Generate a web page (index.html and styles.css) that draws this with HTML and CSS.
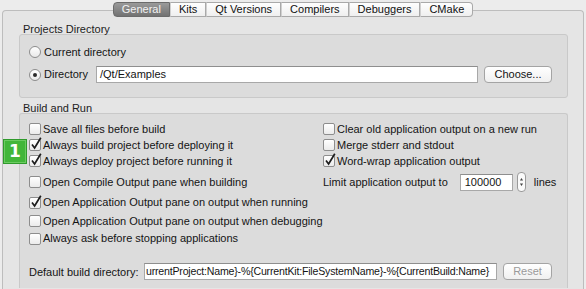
FILE: index.html
```html
<!DOCTYPE html>
<html lang="en">
<head>
  <meta charset="UTF-8" />
  <title>Build and Run - General</title>
  <link rel="stylesheet" href="styles.css">
</head>
<body>

<div class="window">
  <div class="tabs">
    <div class="tab active">General</div>
    <div class="tab">Kits</div>
    <div class="tab">Qt Versions</div>
    <div class="tab">Compilers</div>
    <div class="tab">Debuggers</div>
    <div class="tab">CMake</div>
  </div>

  <div class="pane">
    <div class="group-title">Projects Directory</div>
    <div class="group projects">
      <div class="option"><span class="radio"></span>Current directory</div>
      <div class="dir-row">
        <div class="option dir-option"><span class="radio checked"></span>Directory</div>
        <div class="field dir-field">/Qt/Examples</div>
        <div class="button choose">Choose...</div>
      </div>
    </div>

    <div class="group-title second">Build and Run</div>
    <div class="group build">
      <div class="options">
        <div class="option"><span class="check"></span>Save all files before build</div>
        <div class="option"><span class="check on"><svg viewBox="0 0 14 14"><path d="M3 7.5 L5.6 11 L11.8 0.8" /></svg></span>Always build project before deploying it</div>
        <div class="option"><span class="check on"><svg viewBox="0 0 14 14"><path d="M3 7.5 L5.6 11 L11.8 0.8" /></svg></span>Always deploy project before running it</div>
        <div class="option"><span class="check"></span>Open Compile Output pane when building</div>
        <div class="option"><span class="check on"><svg viewBox="0 0 14 14"><path d="M3 7.5 L5.6 11 L11.8 0.8" /></svg></span>Open Application Output pane on output when running</div>
        <div class="option"><span class="check"></span>Open Application Output pane on output when debugging</div>
        <div class="option"><span class="check"></span>Always ask before stopping applications</div>

        <div class="option"><span class="check"></span>Clear old application output on a new run</div>
        <div class="option"><span class="check"></span>Merge stderr and stdout</div>
        <div class="option"><span class="check on"><svg viewBox="0 0 14 14"><path d="M3 7.5 L5.6 11 L11.8 0.8" /></svg></span>Word-wrap application output</div>
        <div class="option limit-row">
          <span>Limit application output to</span>
          <div class="field limit-field">100000</div>
          <span class="spinner"><svg viewBox="0 0 9 20"><path d="M2.5 8 L4.5 5 L6.5 8 Z M2.5 12 L4.5 15 L6.5 12 Z" /></svg></span>
          <span class="lines">lines</span>
        </div>
      </div>

      <div class="build-dir-row">
        <span class="build-dir-label">Default build directory:</span>
        <div class="field build-dir-field">urrentProject:Name}-%{CurrentKit:FileSystemName}-%{CurrentBuild:Name}</div>
        <div class="button reset">Reset</div>
      </div>
    </div>
  </div>

  <div class="badge">1</div>
</div>

</body>
</html>
```

FILE: styles.css
```css
* {
  box-sizing: border-box;
}

body {
  margin: 0;
  background: #ececec;
  color: #141414;
  font-family: "Liberation Sans", Arial, sans-serif;
  font-size: 11px;
  height: 289px;
  overflow: hidden;
}

.window {
  position: relative;
  height: 289px;
  overflow: hidden;
}

/* tab bar */
.tabs {
  position: relative;
  z-index: 1;
  display: flex;
  justify-content: center;
  padding-top: 2px;
}

.tab {
  height: 15px;
  line-height: 13px;
  padding: 0 8px;
  background: linear-gradient(#fefefe, #efefef);
  border: 1px solid #a9a9a9;
  border-left: 1px solid #d0d0d0;
  color: #111;
}
.tab:first-child {
  border-left: 1px solid #6b6b6b;
  border-radius: 4px 0 0 4px;
}
.tab:last-child {
  border-radius: 0 4px 4px 0;
}
.tab.active {
  background: linear-gradient(#9a9a9a, #727272);
  border-color: #6b6b6b;
  color: #f2f2f2;
}

/* main pane */
.pane {
  margin: -7px 2px 0 2px;
  height: 279px;
  padding: 11px 15px 0 16px;
  background: #e5e5e5;
  border: 1px solid #bdbdbd;
  border-bottom: none;
  border-radius: 4px 4px 0 0;
}

.group-title {
  padding-left: 4px;
  line-height: 14px;
  margin-bottom: -2px;
  color: #222;
}
.group-title.second {
  margin-top: 3px;
}

.group {
  background: #dcdcdc;
  border: 1px solid #c9c9c9;
  border-radius: 3px;
}

.projects {
  padding: 9px 15px 14px 9px;
}
.projects > .option {
  height: 16px;
}

.option {
  display: flex;
  align-items: center;
  line-height: 13px;
  white-space: nowrap;
}

.radio {
  width: 12px;
  height: 12px;
  margin-right: 3px;
  border: 1px solid #8d8d8d;
  border-radius: 50%;
  background: linear-gradient(#ffffff, #e9e9e9);
  display: flex;
  align-items: center;
  justify-content: center;
}
.radio.checked::after {
  content: "";
  width: 4px;
  height: 4px;
  border-radius: 50%;
  background: #2a2a2a;
}

.dir-row {
  display: flex;
  align-items: center;
  margin-top: 6px;
  height: 17px;
}
.dir-option {
  width: 67px;
}

.field {
  height: 17px;
  line-height: 15px;
  padding: 0 3px;
  background: #fff;
  border: 1px solid #a8a8a8;
  border-top-color: #8e8e8e;
  white-space: nowrap;
  overflow: hidden;
}
.dir-field {
  flex: 1;
}

.button {
  height: 17px;
  line-height: 15px;
  text-align: center;
  background: linear-gradient(#ffffff, #f0f0f0);
  border: 1px solid #a4a4a4;
  border-radius: 4px;
}
.choose {
  width: 68px;
  margin-left: 6px;
}

/* build and run */
.build {
  height: 175px;
  padding: 7px 15px 0 9px;
  border-bottom: none;
  border-radius: 3px 3px 0 0;
}

.options {
  display: grid;
  grid-template-columns: 294px 1fr;
  grid-template-rows: 16px 16px 16px 26px 15px 22px 13px;
  grid-auto-flow: column;
}

.check {
  position: relative;
  flex: none;
  width: 12px;
  height: 12px;
  margin-right: 2px;
  border: 1px solid #8d8d8d;
  border-radius: 2px;
  background: linear-gradient(#ffffff, #ebebeb);
}
.check svg {
  position: absolute;
  left: -1px;
  top: -3px;
  width: 14px;
  height: 14px;
}
.check svg path {
  fill: none;
  stroke: #1c1c1c;
  stroke-width: 1.7;
}

.limit-field {
  width: 53px;
  margin-left: 12px;
  padding-left: 4px;
}
.spinner {
  width: 9px;
  height: 20px;
  margin-left: 4px;
  border: 1px solid #9a9a9a;
  border-radius: 4px;
  background: #fafafa;
  display: flex;
}
.spinner svg {
  width: 7px;
  height: 18px;
}
.spinner path {
  fill: #444;
}
.lines {
  margin-left: 8px;
}

.build-dir-row {
  display: flex;
  align-items: center;
  margin-top: 18px;
}
.build-dir-label {
  width: 115px;
  white-space: nowrap;
}
.build-dir-field {
  flex: 1;
  padding: 0 1px;
  font-size: 10.6px;
  letter-spacing: -0.2px;
}
.reset {
  width: 49px;
  margin-left: 6px;
  color: #9a9a9a;
}

/* step marker over the options */
.badge {
  position: absolute;
  left: 3px;
  top: 139px;
  width: 24px;
  height: 25px;
  background: #42b63a;
  border: 1px solid #2f9a2c;
  box-shadow: inset 0 0 0 1px #6ccb62;
  color: #fff;
  font-family: "DejaVu Sans", sans-serif;
  font-weight: bold;
  font-size: 17px;
  line-height: 23px;
  text-align: center;
}
```
